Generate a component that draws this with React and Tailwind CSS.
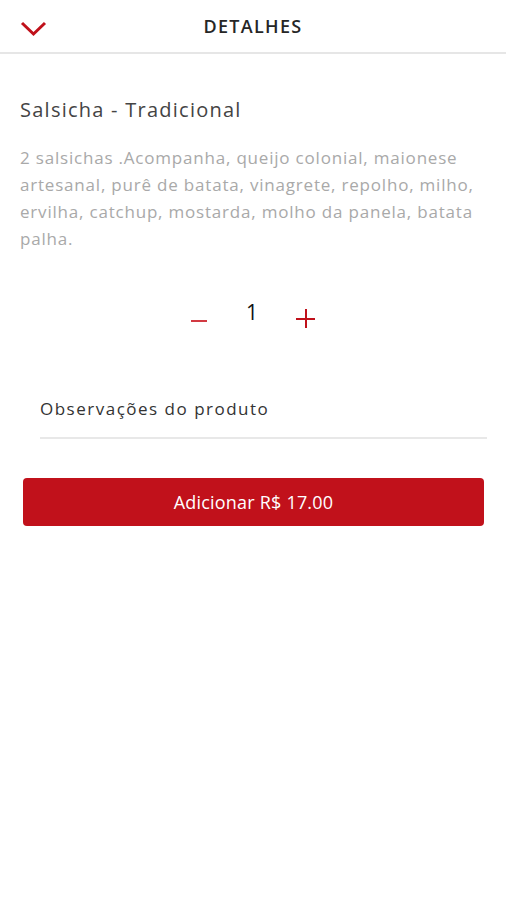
import React from "react";

const font = { fontFamily: "'Open Sans', 'Noto Sans', sans-serif" };

export default function App() {
  return (
    <div className="min-h-[900px] w-full bg-white" style={font}>
      {/* Header */}
      <div className="relative flex h-[54px] items-center justify-center border-b-2 border-[#e6e6e6]">
        <button className="absolute left-[20px] top-[20px]" aria-label="Voltar">
          <svg width="27" height="17" viewBox="0 0 27 17" fill="none">
            <path d="M2 3l11.5 11L25 3" stroke="#c0111b" strokeWidth="3" />
          </svg>
        </button>
        <h1 className="text-[18px] font-semibold tracking-[1.3px] text-[#262626]">DETALHES</h1>
      </div>

      <div className="px-[20px] pt-[42px]">
        <h2 className="text-[20px] leading-[28px] tracking-[1.25px] text-[#444]">Salsicha - Tradicional</h2>
        <p className="mt-[20px] whitespace-nowrap text-[17px] leading-[27px] tracking-[0.8px] text-[#a9a9a9]">
          2 salsichas .Acompanha, queijo colonial, maionese
          <br />
          artesanal, purê de batata, vinagrete, repolho, milho,
          <br />
          ervilha, catchup, mostarda, molho da panela, batata
          <br />
          palha.
        </p>
      </div>

      {/* Quantity */}
      <div className="mt-[50px] flex items-start justify-center">
        <button className="mt-[17px] flex h-[4px] w-[17px] items-center" aria-label="Diminuir">
          <span className="block h-[2px] w-[16px] bg-[#d23a42]" />
        </button>
        <span className="mx-[38px] -mt-[3px] text-[21px] leading-[26px] text-[#111]">1</span>
        <button className="relative mt-[7px] h-[19px] w-[19px]" aria-label="Aumentar">
          <span className="absolute left-0 top-[9px] block h-[2px] w-[19px] bg-[#c0111b]" />
          <span className="absolute left-[9px] top-0 block h-[19px] w-[2px] bg-[#c0111b]" />
        </button>
      </div>

      {/* Observations */}
      <div className="mx-[40px] mr-[19px] mt-[69px] border-b-2 border-[#e8e8e8] pb-[16px]">
        <span className="text-[17px] leading-[24px] tracking-[1.5px] text-[#333]">Observações do produto</span>
      </div>

      {/* Add button */}
      <div className="mx-[23px] mr-[22px] mt-[39px]">
        <button className="flex h-[48px] w-full items-center justify-center rounded-[4px] bg-[#c1111b] text-[18px] tracking-[0.2px] text-white">
          Adicionar R$ 17.00
        </button>
      </div>
    </div>
  );
}
